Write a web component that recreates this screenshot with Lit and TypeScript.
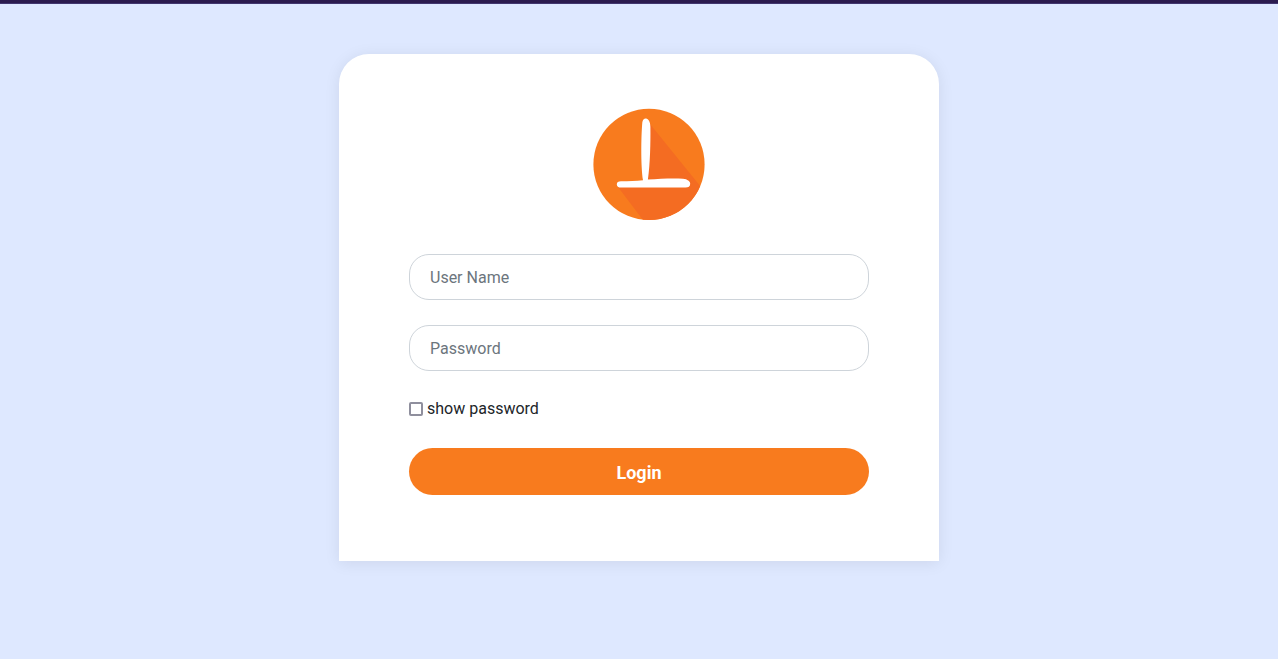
import { LitElement, html, css, svg } from "lit";
import { customElement, state } from "lit/decorators.js";

const logo = svg`
  <defs>
    <clipPath id="disc"><circle cx="56" cy="56.4" r="55.6" /></clipPath>
  </defs>
  <circle cx="56" cy="56.4" r="55.6" fill="#f87b1e" />
  <path clip-path="url(#disc)" fill="#f46c22"
    d="M57 16 L112 84 V112 H50 L25 79 L52 74 Z" />
  <path fill="#fff"
    d="M49.3 14.5 C49.7 11.5 51.2 10.2 53 10.4 C55.5 10.6 57.4 13.8 57.4 19 C57.6 34 57.2 56 54.9 71.6
       C67 70.8 80 70.2 90 70.8 C94.5 71.2 97.2 73.4 97.2 75.8 C97.2 78.4 95.4 79.6 92.6 79.6
       H28 C25.4 79.6 23.8 78.4 23.8 76.4 C23.8 74.4 25.2 73.4 28 73.3 C36 73.2 43 73 50 72.2
       C47.8 58 48 30 49.3 14.5 Z" />
`;

@customElement("app-root")
export class AppRoot extends LitElement {
  @state() private revealed = false;

  static styles = css`
    :host {
      display: block;
      box-sizing: border-box;
      min-height: 100vh;
      padding-bottom: 50px;
      border-top: 3px solid #2b1b4f;
      background: #dee8ff;
      color: #212529;
      font: 16px/24px Roboto, sans-serif;
    }
    *,
    *::before {
      box-sizing: border-box;
    }
    .page {
      padding-top: 50px;
      border-top: 1px solid #40356f;
    }
    .card {
      display: flex;
      flex-direction: column;
      max-width: 600px;
      margin: 0 auto;
      padding: 50px 70px 66px;
      border-radius: 30px 30px 0 0;
      background: #fff;
      box-shadow: 0 2px 16px rgba(0, 0, 0, 0.08);
    }
    .brand {
      display: flex;
      justify-content: center;
      padding: 4px 0 34px 20px;
    }
    .logo {
      display: block;
      width: 112px;
      height: 112px;
    }
    .field {
      width: 100%;
      height: 46px;
      margin: 0 0 25px;
      padding: 10px 20px;
      border: 1px solid #ced4da;
      border-radius: 20px;
      background: #fff;
      color: #495057;
      font: inherit;
    }
    .field::placeholder {
      color: #6c757d;
      opacity: 1;
    }
    .toggle {
      display: flex;
      align-items: center;
      gap: 4px;
      align-self: flex-start;
      margin-bottom: 26px;
      line-height: 26px;
    }
    .box {
      appearance: none;
      width: 14px;
      height: 14px;
      margin: 0;
      border: 2px solid #8f8f9d;
      border-radius: 2px;
      background: #fff;
    }
    .box:checked {
      border-color: #f87b1e;
      background: #f87b1e;
    }
    .login {
      height: 47px;
      padding: 12px 20px 10px;
      border: 0;
      border-radius: 25px;
      background: #f87b1e;
      color: #fff;
      font: bold 18px/25px Roboto, sans-serif;
      cursor: pointer;
    }
  `;

  private toggle(e: Event) {
    this.revealed = (e.target as HTMLInputElement).checked;
  }

  render() {
    return html`
      <main class="page">
        <form class="card" @submit=${(e: Event) => e.preventDefault()}>
          <div class="brand">
            <svg class="logo" viewBox="0 0 112 112" role="img" aria-label="Logo">${logo}</svg>
          </div>
          <input class="field" type="text" name="username" placeholder="User Name"
            aria-label="User Name" autocomplete="username" />
          <input class="field" type=${this.revealed ? "text" : "password"} name="password"
            placeholder="Password" aria-label="Password" autocomplete="current-password" />
          <label class="toggle">
            <input class="box" type="checkbox" @change=${this.toggle} />
            <span>show password</span>
          </label>
          <button class="login" type="submit">Login</button>
        </form>
      </main>
    `;
  }
}
